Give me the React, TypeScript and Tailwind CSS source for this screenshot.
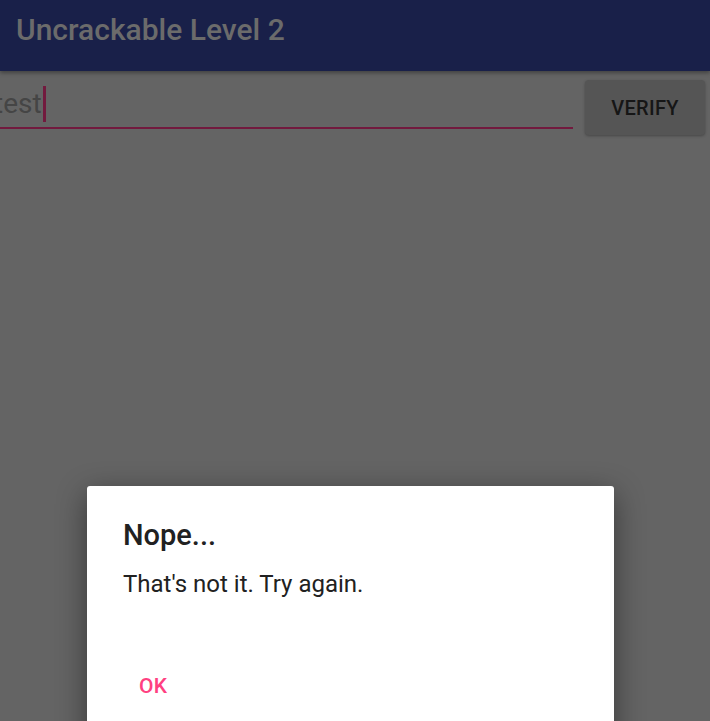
export default function App() {
  return (
    <div
      className="relative w-[710px] h-[721px] overflow-hidden bg-[#646464]"
      style={{ fontFamily: 'Roboto, "Noto Sans", sans-serif' }}
    >
      {/* Toolbar */}
      <div className="h-[71px] bg-[#192049] flex items-center px-4 shadow-[0_2px_4px_rgba(0,0,0,0.35)] relative z-10">
        <h1 className="text-[30px] font-medium text-[#6b6b6b] leading-none -mt-[12px]">Uncrackable Level 2</h1>
      </div>

      {/* Input row */}
      <div className="flex items-start pt-[9px]">
        <div className="flex-1 ml-[-6px] mr-[12px]">
          <div className="h-[48px] flex items-center">
            <span className="text-[28px] text-[#454545] leading-none">test</span>
            <span className="w-[3px] h-[36px] bg-[#721a3e] ml-[1px]"></span>
          </div>
          <div className="h-[2px] bg-[#721a3e] mt-[-1px]"></div>
        </div>
        <button className="w-[120px] h-[55px] mr-[5px] bg-[#555555] rounded-[4px] shadow-[0_1px_3px_rgba(0,0,0,0.3)] text-[20px] font-medium text-[#161616] tracking-[0.3px]">
          VERIFY
        </button>
      </div>

      {/* Dialog */}
      <div className="absolute left-[87px] top-[486px] w-[527px] h-[260px] bg-white rounded-[3px] shadow-[0_8px_30px_rgba(0,0,0,0.45)]">
        <div className="pl-[36px] pt-[30px]">
          <h2 className="text-[29px] font-medium text-[#212121] leading-[38px]">Nope...</h2>
          <p className="text-[24px] text-[#212121] mt-[15px] leading-[30px]">That's not it. Try again.</p>
        </div>
        <div className="pl-[52px] mt-[72px]">
          <span className="text-[21px] font-medium text-[#ff4081] tracking-[0.3px]">OK</span>
        </div>
      </div>
    </div>
  );
}
